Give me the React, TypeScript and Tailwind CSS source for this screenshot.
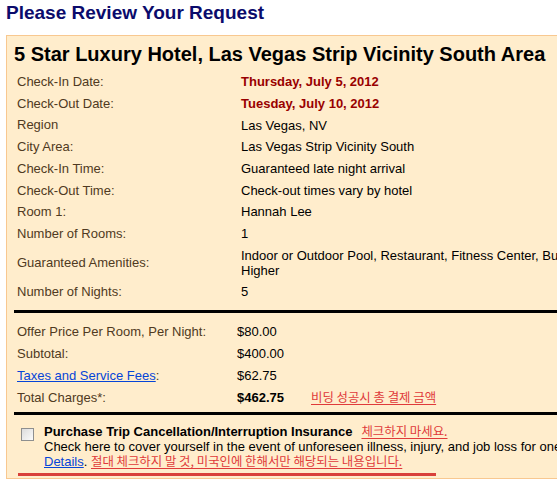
const DETAILS: { label: string; value: string; strong?: boolean; tall?: boolean }[] = [
  { label: 'Check-In Date:', value: 'Thursday, July 5, 2012', strong: true },
  { label: 'Check-Out Date:', value: 'Tuesday, July 10, 2012', strong: true },
  { label: 'Region', value: 'Las Vegas, NV' },
  { label: 'City Area:', value: 'Las Vegas Strip Vicinity South' },
  { label: 'Check-In Time:', value: 'Guaranteed late night arrival' },
  { label: 'Check-Out Time:', value: 'Check-out times vary by hotel' },
  { label: 'Room 1:', value: 'Hannah Lee' },
  { label: 'Number of Rooms:', value: '1' },
  {
    label: 'Guaranteed Amenities:',
    value: 'Indoor or Outdoor Pool, Restaurant, Fitness Center, Business Center, 3.5 Stars or Higher',
    tall: true,
  },
  { label: 'Number of Nights:', value: '5' },
];

const KR = "font-['Noto_Sans_CJK_KR',sans-serif]";

function Note({ children }: { children: string }) {
  return (
    <span className={`${KR} text-[12.4px] leading-[15px] text-[#e03a3a] underline underline-offset-2`}>{children}</span>
  );
}

export default function App() {
  return (
    <div className="w-[557px] h-[485px] overflow-hidden bg-white font-['Liberation_Sans',Arial,sans-serif] text-[13px]">
      <h1 className="pl-[6px] pt-[2px] h-[35px] text-[19px] font-bold text-[#0b0b6c] leading-[22px]">Please Review Your Request</h1>

      <div className="ml-[6px] w-[600px] border border-[#f8c890] bg-[#ffedcc] pb-[2px]">
        <h2 className="pl-[7px] pt-[6px] h-[35px] text-[20px] font-bold text-black leading-[24px] whitespace-nowrap">
          5 Star Luxury Hotel, Las Vegas Strip Vicinity South Area
        </h2>

        <div className="pl-[10px]">
          {DETAILS.map((d) => (
            <div key={d.label} className={`flex items-center ${d.tall ? 'h-[36px]' : 'h-[21.7px]'}`}>
              <div className="w-[224px] shrink-0 text-[#4f3a22]">{d.label}</div>
              <div
                className={
                  d.strong
                    ? 'font-bold text-[#990000]'
                    : `text-black leading-[15px] ${d.tall ? 'w-[330px]' : ''}`
                }
              >
                {d.tall ? (
                  <>
                    <div className="whitespace-nowrap">Indoor or Outdoor Pool, Restaurant, Fitness Center, Business Center</div>
                    <div>Higher</div>
                  </>
                ) : (
                  d.value
                )}
              </div>
            </div>
          ))}
        </div>

        <div className="ml-[7px] mt-[8px] h-[3px] bg-black" />

        <div className="pl-[10px] pt-[8px]">
          <div className="flex items-center h-[22px]">
            <div className="w-[220px] shrink-0 text-[#4f3a22]">Offer Price Per Room, Per Night:</div>
            <div>$80.00</div>
          </div>
          <div className="flex items-center h-[22px]">
            <div className="w-[220px] shrink-0 text-[#4f3a22]">Subtotal:</div>
            <div>$400.00</div>
          </div>
          <div className="flex items-center h-[21.5px]">
            <div className="w-[220px] shrink-0 text-[#4f3a22]">
              <a className="text-[#0645d8] underline">Taxes and Service Fees</a>:
            </div>
            <div>$62.75</div>
          </div>
          <div className="flex items-center h-[21.5px]">
            <div className="w-[220px] shrink-0 text-[#4f3a22]">Total Charges*:</div>
            <div className="w-[74px] font-bold">$462.75</div>
            <Note>비딩 성공시 총 결제 금액</Note>
          </div>
        </div>

        <div className="ml-[7px] mt-[4px] h-[3px] bg-black" />

        <div className="flex pl-[14px] pt-[9px]">
          <span className="mt-[4px] w-[13px] h-[13px] shrink-0 border border-[#8e8f8f] bg-gradient-to-br from-[#dcdcdc] to-[#fbfbfb]" />
          <div className="pl-[10px] leading-[15px] whitespace-nowrap">
            <div className="h-[15px]">
              <span className="font-bold">Purchase Trip Cancellation/Interruption Insurance</span>
              <span className="ml-[9px]">
                <Note>체크하지 마세요.</Note>
              </span>
            </div>
            <div className="h-[15px]">Check here to cover yourself in the event of unforeseen illness, injury, and job loss for one low price.</div>
            <div className="h-[15px]">
              <a className="text-[#0645d8] underline">Details</a>. <Note>절대 체크하지 말 것, 미국인에 한해서만 해당되는 내용입니다.</Note>
            </div>
          </div>
        </div>
        <div className="ml-[11px] mt-[4px] w-[418px] h-[3px] bg-[#d9403a]" />
      </div>
    </div>
  );
}
